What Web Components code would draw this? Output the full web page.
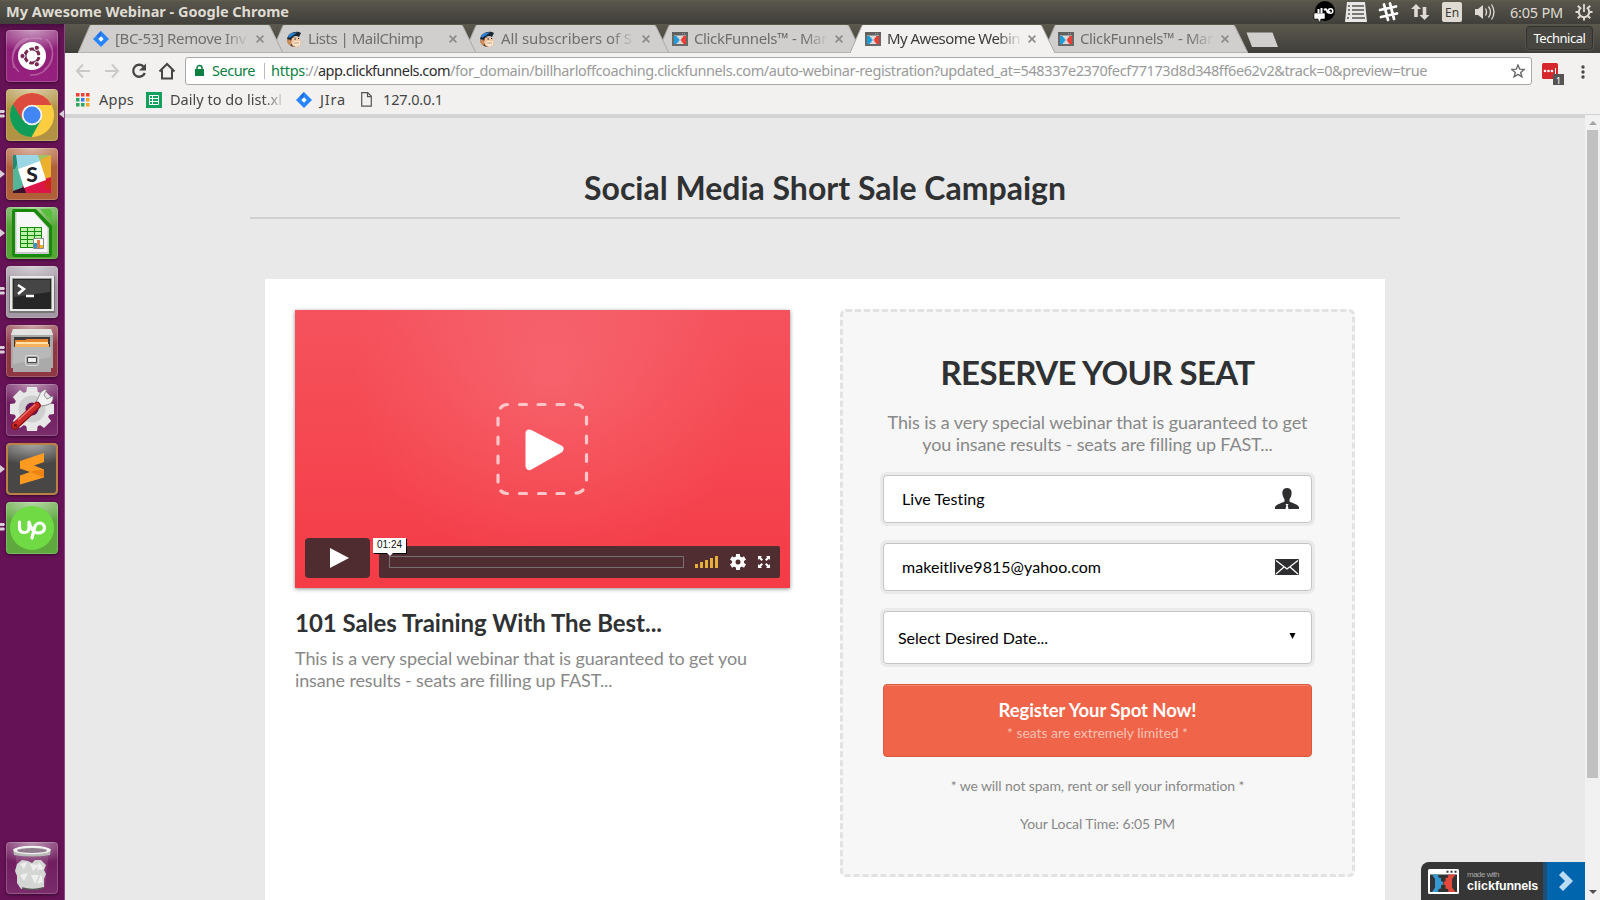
<!DOCTYPE html>
<html lang="en">
<head>
<meta charset="utf-8">
<title>My Awesome Webinar</title>
<style>
html,body{margin:0;height:100%;overflow:hidden}
body{font-family:"Noto Sans","Open Sans",sans-serif}
</style>
</head>
<body>
<desk-top></desk-top>
<script>
const make=(name,css,html,after)=>customElements.define(name,class extends HTMLElement{
  constructor(){super();this.attachShadow({mode:'open'})}
  connectedCallback(){
    if(this.shadowRoot.firstChild)return;
    this.shadowRoot.innerHTML='<style>:host{display:block;box-sizing:border-box}*{box-sizing:border-box}svg{display:block}'+css+'</style>'+(typeof html==='function'?html(this):html);
    if(after)after(this);
  }
});

/* Single line of text spread to a given pixel width */
make('fit-text',':host{white-space:pre;width:max-content;flex:none}span{display:inline-block}',
  e=>`<span>${e.getAttribute('text').replace(/&/g,'&amp;')}</span>`,
  e=>{const w=+e.getAttribute('w'),s=e.shadowRoot.querySelector('span');if(w){const n=s.getBoundingClientRect().width;s.style.letterSpacing=((w-n)/e.getAttribute('text').length)+'px'}});

const ICON={
jira:'<svg width="16" height="16" viewBox="0 0 16 16"><path d="M8 0l8 8-8 8-8-8z" fill="#2684ff"/><path d="M8 0L3.5 4.500 8 9z" fill="#1f6fe0"/><path d="M8 5.300L10.700 8 8 10.700 5.300 8z" fill="#fff"/></svg>',
chimp:'<svg width="16" height="17" viewBox="0 0 16 17"><path d="M3 6C0 9 2 14 6 15.500l3 .5 3-9z" fill="#5b3823"/><path d="M6 7l7-1 2 4c0 4-2 6-5 6s-5-3-5-5z" fill="#efc7a0"/><path d="M8 10l6 0v4l-4 1.500-3-2z" fill="#fbe6d0"/><path d="M1 8C2 3 7 0 13 1l2 1-2 4C10 4 7 5 4 9z" fill="#1b2635"/><path d="M2 5C4 2 8 1 11 1.500L6 5 3 7z" fill="#2f86d8"/><path d="M1 11a2 2 0 0 1 4-1v4H3z" fill="#c98b5c"/><path d="M8.500 8h1.500M12 7.500h1.200" stroke="#222"/><path d="M8 12h5" stroke="#a77853" stroke-width=".7"/></svg>',
funnel:'<svg width="16" height="14" viewBox="0 0 16 14"><path d="M1 1h14v12H1z" fill="#dcdcdc" stroke="#6a6a6a" stroke-width="2"/><path d="M0 0h16v3.500H0z" fill="#606060"/><path d="M2 4h2.500l.8 1.600h1.200v1.600h1v1.600h-1v1.600H5.300L4.500 12H2z" fill="#1f9bd8"/><path d="M14 4h-2.500l-.8 1.600H9.700v1.600h-1v1.600h1v1.600h1l.8 1.600H14z" fill="#ec3f34"/><path d="M10 1.800h1M12 1.800h1" stroke="#aaa"/></svg>',
close:'<svg width="8" height="8" viewBox="0 0 8 8"><path d="M.6.6l6.800 6.800M7.400.6L.6 7.400" stroke="#8b8b8a" stroke-width="1.600"/></svg>'
};

make('browser-tab',
`:host{width:205px;height:29px;margin-right:-12px;position:relative;flex:none;display:flex;align-items:center;padding-left:15px;color:#6e6e6d;font-size:15px;z-index:var(--z,1)}
:host([active]){color:#3d3d3d}
.shape{position:absolute;left:0;top:0}
.ic{position:relative;width:16px;height:16px;display:grid;place-items:center}
.t{position:relative;margin-left:6px;width:133px;height:28px;line-height:27px;-webkit-mask-image:linear-gradient(90deg,#000 83%,rgba(0,0,0,.15) 98%)}
.x{position:relative;margin-left:8px}`,
e=>`<svg class="shape" width="205" height="29" viewBox="0 0 205 29"><path d="M0 29L12 1.500Q12.500 1 13 1H190Q191 1 191.500 1.500L205 29z" fill="${e.hasAttribute('active')?'#f2f1f0':'#d0cfcd'}"/><path d="M0 29L12 1.500M191.500 1.500L205 29" stroke="#aaa9a6" fill="none"/>${e.hasAttribute('active')?'':'<path d="M1 28.500H204" stroke="#b4b3b1"/>'}</svg><div class="ic">${ICON[e.getAttribute('icon')]}</div><div class="t"><fit-text text="${e.getAttribute('label')}" w="${e.getAttribute('w')}"></fit-text></div><div class="x">${ICON.close}</div>`);

make('top-panel',
`:host{height:24px;display:flex;align-items:center;background:linear-gradient(#605e50,#57554b 2px,#403f3a);color:#dfdbd2;font-size:14.500px;padding:0 7px 0 6px;line-height:22px}
.b{font-weight:700;flex:1;margin-top:-2px}.r{display:flex;align-items:center;height:24px}`,
`<div class="b"><fit-text text="My Awesome Webinar - Google Chrome" w="283"></fit-text></div>
<div class="r">
<svg width="24" height="24" viewBox="0 0 24 24"><circle cx="13" cy="11" r="10" fill="#000"/><path d="M2 13h11v6H9l-2 4-1-4H2z" fill="#fff" stroke="#000" stroke-width=".6"/><path d="M6.500 9v4M9.500 8v5" stroke="#fff" stroke-width="2"/><path d="M12 10q2-2 3 1t3 0" fill="none" stroke="#fff" stroke-width="2"/><circle cx="18.500" cy="11" r="2.300" fill="none" stroke="#fff" stroke-width="1.500"/></svg>
<svg style="margin-left:9px" width="22" height="21" viewBox="0 0 22 21"><path d="M2 0h18l2 20H0z" fill="#e8e8e8"/><path d="M3 4h2M7 4h12M3 8h2M7 8h12M3 12h2M7 12h12M2 16h2M7 16h13" stroke="#55544d" stroke-width="1.500"/></svg>
<svg style="margin-left:10px" width="22" height="22" viewBox="0 0 22 22"><path d="M7 3.500l4 15.500M13 2.500l4 15.500M3 9l16-3.500M4 16l16-3.500" stroke="#fff" stroke-width="2.800" stroke-linecap="round"/></svg>
<svg style="margin-left:12px" width="19" height="18" viewBox="0 0 19 18"><path d="M5 1l5 5H6.800v8H3.200V6H0zM13.500 17l-5-5h3.200V4h3.600v8h3.200z" fill="#dfdbd2"/></svg>
<svg style="margin-left:12px" width="20" height="20" viewBox="0 0 20 20"><rect width="20" height="20" rx="2" fill="#dfdbd2"/><text x="10" y="15" text-anchor="middle" font-family="Noto Sans" font-size="12" fill="#3c3b37">En</text></svg>
<svg style="margin-left:12px" width="22" height="18" viewBox="0 0 22 18"><path d="M1 6h3l5-4v14l-5-4H1z" fill="#dfdbd2"/><path d="M11.500 5.500q2 3.500 0 7M14.500 3.500q4 5.500 0 11M17.500 1.500q5 7.500 0 15" fill="none" stroke="#dfdbd2" stroke-width="1.300"/></svg>
<fit-text style="margin-left:14px" text="6:05 PM" w="53"></fit-text>
<svg style="margin-left:12px" width="18" height="18" viewBox="0 0 18 18"><path d="M6.300 4.500a5.200 5.200 0 1 0 5.400 0" fill="none" stroke="#dfdbd2" stroke-width="2"/><path d="M9 1v8" stroke="#dfdbd2" stroke-width="1.800"/><path d="M2.800 2.800l2 2M15.200 2.800l-2 2M.5 9h3M17.500 9h-3M2.800 15.200l2-2M15.200 15.200l-2-2M9 17.500v-3" stroke="#dfdbd2" stroke-width="2"/></svg>
</div>`);

make('launcher-tile',
`:host{width:65px;height:59px;position:relative;flex:none;padding-left:6px}
.t{width:52px;height:52px;border-radius:4px;background:radial-gradient(ellipse 46px 22px at 50% 0,rgba(255,255,255,.55),rgba(255,255,255,0)),var(--c,#7d2a6f);box-shadow:0 0 0 1px rgba(255,255,255,.2) inset,0 1px 3px rgba(0,0,0,.5);overflow:hidden}
.p{position:absolute;left:0;top:20px}.q{position:absolute;right:1px;top:21px}`,
e=>`<div class="t"><slot></slot></div>`+
({two:'<svg class="p" width="5" height="12"><path d="M0 1h4l1 1.500L4 4H0zM0 5.500h4L5 7l-1 1.500H0z" fill="#d9cfd7"/></svg>',one:'<svg class="p" width="5" height="12"><path d="M0 2l5 4-5 4z" fill="#d9cfd7"/></svg>'}[e.getAttribute('pip')]||'')+(e.hasAttribute('focus')?'<svg class="q" width="5" height="8"><path d="M5 0L0 4l5 4z" fill="#d9cfd7"/></svg>':''));

make('app-launcher',
`:host{width:65px;background:linear-gradient(#4a0d41,#661256 8px,#661256);border-right:1px solid #8b4a7f;display:flex;flex-direction:column;padding-top:6px;height:877px}
.s{flex:1}`,
`<launcher-tile style="--c:linear-gradient(#8a1f74,#97207e)"><svg width="52" height="52" viewBox="0 0 52 52"><g fill="none" stroke="#d9a6cd" opacity=".45"><path d="M8 38C2 18 20 4 36 9M44 14c8 16-4 32-20 31M13 42C0 30 8 10 22 8M40 9c10 8 8 24-2 31" stroke-width="1.500"/></g><circle cx="26" cy="26" r="14" fill="#fff"/><circle cx="26" cy="26" r="7" fill="none" stroke="#772953" stroke-width="3" stroke-dasharray="12.600 2.060" transform="rotate(8 26 26)"/><g fill="#772953" stroke="#fff" stroke-width="1"><circle cx="16.500" cy="26" r="2.600"/><circle cx="30.800" cy="17.800" r="2.600"/><circle cx="30.800" cy="34.300" r="2.600"/></g></svg></launcher-tile>
<launcher-tile pip="two" focus style="--c:#b29343"><svg width="52" height="52" viewBox="0 0 52 52"><circle cx="26" cy="26" r="22" fill="#ffcd40"/><path d="M6.900 15A22 22 0 0 0 25.500 48L35 31 26 26z" fill="#119d58"/><path d="M6.900 15A22 22 0 0 1 45.600 16H26L16.500 31z" fill="#dd4b3e"/><circle cx="26" cy="26" r="10.300" fill="#f1f1f1"/><circle cx="26" cy="26" r="8.500" fill="#4285f4"/></svg></launcher-tile>
<launcher-tile pip="one" style="--c:#b06038"><svg width="52" height="52" viewBox="0 0 52 52"><path d="M7 7h38v38H7z" fill="#55b598"/><path d="M7 7h8L9 21H7z" fill="#1e8c76"/><path d="M10 7h22l3 6-23 8z" fill="#9bd6e5"/><path d="M32 7h13L34 13z" fill="#a8bf60"/><path d="M34 12l11-5v24l-6 3z" fill="#ecb02c"/><path d="M16 38l29-9v16H19z" fill="#dc1549"/><path d="M38 34l7-3v9l-5 2z" fill="#d2201c"/><path d="M7 43l11-4 2 6H7z" fill="#36122b"/><path d="M12 21l22-8 6 19-22 8z" fill="#fff"/><text x="26" y="33.500" text-anchor="middle" font-family="Lato" font-weight="900" font-size="21" fill="#1f2226">S</text></svg></launcher-tile>
<launcher-tile pip="one" style="--c:#55a537"><svg width="52" height="52" viewBox="0 0 52 52"><path d="M8 2h22l16 17v28q0 3-3 3H9q-3 0-3-3V5q0-3 2-3z" fill="#188a08"/><path d="M34 2h10l2 2v11z" fill="#58bd3c"/><path d="M9 5h19l15 16v26H9z" fill="#c9c9c9"/><path d="M10.500 5h17l14 16v24h-31z" fill="#f7f7f7"/><path d="M14 20h22v21H14z" fill="#168a0c"/><g fill="#bcf3a8"><path d="M15 21h6v3h-6zM22 21h6v3h-6zM29 21h6v3h-6zM15 25h6v3h-6zM22 25h6v3h-6zM29 25h6v3h-6zM15 29h6v3h-6zM22 29h6v3h-6zM29 29h6v3h-6zM15 33h6v3h-6zM22 33h6v3h-6zM15 37h6v3h-6zM22 37h6v3h-6z"/></g><path d="M27.500 31.500h10v10h-10z" fill="#fff" stroke="#888"/><path d="M28 36h3v5h-3z" fill="#289ad0"/><path d="M31 33h3v8h-3z" fill="#e57c43"/><path d="M34 38h3v3h-3z" fill="#eab522"/></svg></launcher-tile>
<launcher-tile pip="two" style="--c:#a397a4"><svg width="52" height="52" viewBox="0 0 52 52"><path d="M3 10h46v37H3z" fill="#777"/><path d="M4 10h44v35H4z" fill="#e9e9e8"/><path d="M6 12h40v31H6z" fill="#999"/><path d="M7 13h38v30H7z" fill="#262626"/><path d="M8 14h36v12L8 31z" fill="#454545"/><path d="M12 19l6 4-6 5" fill="none" stroke="#fff" stroke-width="2.500"/><path d="M20 30h8" stroke="#fff" stroke-width="2.500"/></svg></launcher-tile>
<launcher-tile pip="two" style="--c:#8f3844"><svg width="52" height="52" viewBox="0 0 52 52"><path d="M7 4h38l2 5v34H5V9z" fill="#a9a9a7"/><path d="M7 4h38l2 6H5z" fill="#e3e3e1"/><path d="M8 12h36v11H8z" fill="#3c3c3c"/><path d="M9 15h10l2-1h21v8H9z" fill="#e8862e"/><path d="M10 17h32v3H10z" fill="#ffe1a9"/><path d="M9 19h34v4H9z" fill="#f5b35d"/><path d="M7 22h38v25H7z" fill="#aaa"/><path d="M7 22h38v10L7 39z" fill="#b8b8b8"/><rect x="19.500" y="30.500" width="13" height="10" rx="2" fill="#aaa" stroke="#ddd"/><path d="M21.500 32.500h9v5h-9z" fill="#eee" stroke="#444"/></svg></launcher-tile>
<launcher-tile style="--c:linear-gradient(#6a1559,#7a2c6b)"><svg width="52" height="52" viewBox="0 0 52 52"><g fill="#e7e7e7"><circle cx="26" cy="25" r="18"/><path d="M21 3h10l1 7H20zM21 47h10l1-7H20zM4 20v10l7 1V19zM48 20v10l-7 1V19z"/><path d="M21 3h10l1 7H20zM21 47h10l1-7H20zM4 20v10l7 1V19zM48 20v10l-7 1V19z" transform="rotate(45 26 25)"/></g><circle cx="26" cy="25" r="13.500" fill="#cfcfcf"/><circle cx="26" cy="25" r="6.500" fill="#67165b"/><path d="M29 20l4-8q2-6 8-7l-3 6 3 4 6-3q1 7-6 9l-6 1z" fill="#f2f2f2" stroke="#777" stroke-width=".8"/><path d="M31 21.500L9 42" stroke="#8e1313" stroke-width="7.500" stroke-linecap="round"/><path d="M30.500 21.500L9 41.500" stroke="#cf2b2a" stroke-width="5.500" stroke-linecap="round"/><path d="M29 20.500L12 36" stroke="#e97870" stroke-width="1.500"/><circle cx="9.500" cy="41.500" r="1.800" fill="#751111"/></svg></launcher-tile>
<launcher-tile pip="one" style="--c:#484746"><svg width="52" height="52" viewBox="0 0 52 52"><rect x="1" y="1" width="50" height="50" rx="4" fill="none" stroke="#bd8145" stroke-width="2"/><path d="M14 18l24-8v9l-10 3.500 10 4v8l-24 7v-9l10-3.500-10-3.500z" fill="#ff9a20"/><path d="M24 29l4-1.500 10-.500v7.500z" fill="#ee8210"/></svg></launcher-tile>
<launcher-tile pip="two" style="--c:#5fa83e"><svg width="52" height="52" viewBox="0 0 52 52"><circle cx="26" cy="26" r="22" fill="#6fda44"/><path d="M13.500 20v5.500q0 5 4.800 5t4.700-5V20q2 8 7 10.500 3 1 5 0 4-1.500 3.500-5-.5-4-5-4.500-4 .5-5 5l-2.500 10" fill="none" stroke="#fff" stroke-width="3.200" stroke-linecap="round" stroke-linejoin="round"/></svg></launcher-tile>
<div class="s"></div>
<launcher-tile style="--c:linear-gradient(#6a1559,#7a2c6b)"><svg width="52" height="52" viewBox="0 0 52 52"><path d="M9 9l4 36q13 4 26 0l4-36z" fill="#fff" opacity=".1"/><path d="M11 22l5-4 6 1 4 2 3-3 6 0 5 5-2 5 2 4-2 5 0 8-7 3-8-1-8 0-4-6 0-7-2-5z" fill="#d4d6d4"/><path d="M14 22l7-2-3 7zM24 22l9 1-6 6zM33 20l5 7-7 1zM14 33l8-2-4 8zM25 33l8 0-4 9zM35 32l2 8-6 2z" fill="#efefef"/><path d="M16 46q11 3 21 0" stroke="#555" stroke-width="1.500" fill="none"/><path d="M7 7q19-6 38 0l-1 6q-18 3-36 0z" fill="#b9bab7"/><ellipse cx="26" cy="8" rx="18.500" ry="4.300" fill="#f2f2f0"/><ellipse cx="26" cy="8.500" rx="15" ry="2.500" fill="#8f7e8d"/></svg></launcher-tile>`);

make('tab-strip',
`:host{height:29px;background:linear-gradient(#5b594d,#3f3e3a);display:flex;padding-left:13px;position:relative}
.g{flex:1}.new{margin:8px 0 0 -2px}.u{margin:2px 7px 0 0;width:67px;height:24px;border:1px solid #33322e;border-radius:4px;background:#474641;color:#fff;font-size:13px;line-height:22px;display:grid;place-items:center;box-shadow:0 0 0 1px #55534b}
browser-tab:last-of-type{margin-right:0}`,
`<browser-tab icon="jira" label="[BC-53] Remove Inv" w="131" style="--z:6"></browser-tab><browser-tab icon="chimp" label="Lists | MailChimp" w="115" style="--z:5"></browser-tab><browser-tab icon="chimp" label="All subscribers of S" w="131" style="--z:4"></browser-tab><browser-tab icon="funnel" label="ClickFunnels™ - Mar" w="133" style="--z:3"></browser-tab><browser-tab active icon="funnel" label="My Awesome Webin" w="133" style="--z:9"></browser-tab><browser-tab icon="funnel" label="ClickFunnels™ - Mar" w="133" style="--z:1"></browser-tab>
<svg class="new" width="34" height="16"><path d="M.5.5h26l5.500 14.500H6z" fill="#d0cfcd"/></svg><div class="g"></div><div class="u"><fit-text text="Technical" w="52"></fit-text></div>`);

make('address-bar',
`:host{height:35px;background:#f2f1f0;display:flex;padding:4px 9px 0 11px;align-items:flex-start}
.n{display:flex;height:28px;align-items:center;width:109px}
.box{width:1347px;height:28px;border:1px solid #a9a8a6;border-radius:3px;background:#fff;display:flex;align-items:center;font-size:14.500px;padding-left:9px;color:#9a9a9a;line-height:22px}
.box fit-text{margin-top:-2px}
.g{color:#0b8043}.k{color:#2d2d2d}.sep{width:1px;height:16px;background:#bbb;margin:0 6px 0 9px}.f{flex:1}
.ext{margin:6px 0 0 10px}.m{margin:8px 0 0 16px}`,
`<div class="n"><svg width="109" height="28" viewBox="0 0 109 28"><g fill="none" stroke="#cbcac8" stroke-width="2"><path d="M14 14H1M7 7.500L1 14l6 6.500M29 14h13M36 7.500l6 6.500-6 6.500"/></g><g fill="none" stroke="#454545" stroke-width="2.300"><path d="M67.500 9.500a6 6 0 1 0 1.300 6.500"/><path d="M86 13v8.500h10V13M83.500 14.500l7.500-7.500 7.500 7.500" stroke-width="2"/></g><path d="M70 6.500v7h-7z" fill="#454545"/></svg></div>
<div class="box"><svg style="margin-top:-1px" width="9" height="13" viewBox="0 0 9 13"><path d="M2 6V4a2.500 2.500 0 0 1 5 0v2" fill="none" stroke="#0b8043" stroke-width="1.500"/><path d="M0 5h9v7H0z" fill="#0b8043"/></svg><fit-text class="g" style="margin-left:8px" text="Secure" w="43"></fit-text><div class="sep"></div><fit-text class="g" text="https" w="34"></fit-text><fit-text text="://" w="13"></fit-text><fit-text class="k" text="app.clickfunnels.com" w="132"></fit-text><fit-text text="/for_domain/billharloffcoaching.clickfunnels.com/auto-webinar-registration?updated_at=548337e2370fecf77173d8d348ff6e62v2&track=0&preview=true" w="977"></fit-text><div class="f"></div><svg style="margin-right:6px" width="14" height="14" viewBox="0 0 14 14"><path d="M7 1l1.700 4.200 4.500.3-3.500 2.900 1.200 4.400L7 10.300l-3.900 2.500 1.200-4.400L.8 5.500l4.500-.3z" fill="none" stroke="#6a6a6a" stroke-width="1.400"/></svg></div>
<svg class="ext" width="23" height="23" viewBox="0 0 23 23"><rect width="16" height="16" rx="1.500" fill="#d6282b"/><g fill="#fff"><circle cx="3" cy="8" r="1.300"/><circle cx="6.500" cy="8" r="1.300"/><circle cx="10" cy="8" r="1.300"/><path d="M13 5h1v6h-1z"/></g><path d="M11 11h11v11H11z" fill="#555"/><text x="16.500" y="20.500" text-anchor="middle" font-family="Noto Sans" font-size="9.500" fill="#fff">1</text></svg>
<svg class="m" width="4" height="14"><g fill="#484848"><circle cx="2" cy="2" r="1.700"/><circle cx="2" cy="7" r="1.700"/><circle cx="2" cy="12" r="1.700"/></g></svg>`);

make('bookmark-bar',
`:host{height:30px;background:#f2f1f0;border-bottom:4px solid #d3d3d3;display:flex;padding:0 0 0 11px;font-size:14.500px;color:#454545;line-height:22px}
.i{height:23px;display:flex;align-items:center}`,
`<div class="i"><svg width="14" height="14"><g fill="#ee4035"><path d="M0 0h3.500v3.500H0zM5 0h3.500v3.500H5zM10 0h3.500v3.500H10z"/></g><path d="M0 5h3.500v3.500H0zM0 10h3.500v3.500H0zM5 10h3.500v3.500H5z" fill="#2ba55f"/><path d="M5 5h3.500v3.500H5z" fill="#3d7cf0"/><path d="M10 5h3.500v3.500H10zM10 10h3.500v3.500H10z" fill="#f5a42c"/></svg></div><fit-text style="margin-left:9px" text="Apps" w="35"></fit-text>
<div class="i" style="margin-left:12px"><svg width="16" height="16"><path d="M0 0h16v16H0z" fill="#12a05c"/><path d="M3.500 3.500h9v9h-9zM3.500 6.500h9M3.500 9.500h9M6.500 3.500v9" fill="none" stroke="#fff"/></svg></div><div style="margin-left:8px;width:113px;-webkit-mask-image:linear-gradient(90deg,#000 82%,rgba(0,0,0,.15))"><fit-text text="Daily to do list.xl" w="112"></fit-text></div>
<div class="i" style="margin-left:13px">${ICON.jira}</div><fit-text style="margin-left:8px" text="JIra" w="26"></fit-text>
<div class="i" style="margin-left:15px"><svg width="11" height="15"><path d="M.7.7h6l3.600 3.600v9.900H.700zM6.500.7v4h4" fill="none" stroke="#555" stroke-width="1.200"/></svg></div><fit-text style="margin-left:11px" text="127.0.0.1" w="60"></fit-text>`);

make('scroll-bar',
`:host{width:15px;height:785px;margin-top:-3px;background:#f1f1f1;display:flex;flex-direction:column;align-items:center;padding:6px 0 6px}
.t{width:11px;height:648px;background:#c1c1c1;margin:5px 0 0 0}.s{flex:1}`,
`<svg width="8" height="4"><path d="M0 4l4-4 4 4z" fill="#a3a3a3"/></svg><div class="t"></div><div class="s"></div><svg width="8" height="4"><path d="M0 0l4 4 4-4z" fill="#505050"/></svg>`);

make('video-player',
`:host{width:495px;height:278px;position:relative;background:radial-gradient(ellipse 200px 190px at 52% 25%,rgba(255,255,255,.12),rgba(255,255,255,0)),linear-gradient(#f5525d,#f54650 55%,#f43b46);box-shadow:0 1px 4px rgba(0,0,0,.45);display:flex;flex-direction:column;justify-content:flex-end}
.poster{flex:1;padding:89px 0 0 200px}
.c{display:flex;align-items:flex-end;gap:9px;padding:0 10px 10px}
.play{width:65px;height:40px;border-radius:4px;background:#4e2c2f;display:grid;place-items:center}
.bar{flex:1;height:32px;border-radius:2px;background:#502d30;display:flex;align-items:center;padding-left:10px}
.p{width:295px;height:12px;border:1px solid #777071}
.tip{position:absolute;left:78px;top:228px;width:33px;height:15px;background:#fff;box-shadow:1px 1px 0 #000;font:10px/14px "Liberation Sans",sans-serif;color:#111;padding-left:4px}
.tip:after{content:"";position:absolute;left:14px;top:15px;border:3px solid transparent;border-top-color:#fff}`,
`<div class="poster"><svg width="96" height="96" viewBox="0 0 96 96"><g fill="none" stroke="#fcc5c8" stroke-width="3.200" stroke-linecap="round"><path d="M5.500 9Q8 5.500 12.500 5.500M24.500 5.500h7M43 5.500h7M62 5.500h7M80.500 5.500Q86 5.500 87.500 8.500M91.500 18v7M91.500 37v7M91.500 55.500v7M91.500 74v7M88 91Q85 94 81 94M69 94.500h-7M50.500 94.500h-7M31.500 94.500h-7M12.500 94.500Q8.500 94.500 6 92M3 83v-7M3 64v-7M3 45v-7M3 26v-7"/></g><path d="M34.500 34.500L64.500 50 34.500 67z" fill="#fff" stroke="#fff" stroke-width="8" stroke-linejoin="round"/></svg></div>
<div class="c"><div class="play"><svg style="margin-left:5px" width="20" height="20"><path d="M0 0l19 10L0 20z" fill="#fff"/></svg></div><div class="bar"><div class="p"></div>
<svg style="margin-left:11px" width="24" height="12"><path d="M0 8h3v4H0zM5 6h3v6H5zM10 4h3v8h-3zM15 2h3v10h-3zM20 0h3v12h-3z" fill="#e8b03b"/></svg>
<svg style="margin-left:11px" width="16" height="16" viewBox="0 0 16 16"><circle cx="8" cy="8" r="4.300" fill="none" stroke="#fff" stroke-width="3.600"/><path d="M8 0v3M8 13v3M1 4l2.500 1.500M12.500 10.500L15 12M1 12l2.500-1.500M12.500 5.500L15 4" stroke="#fff" stroke-width="4"/></svg>
<svg style="margin-left:12px" width="12" height="12" viewBox="0 0 12 12"><path d="M0 0h4L2.800 1.200 5 3.500 3.500 5 1.200 2.800 0 4zM12 0v4l-1.200-1.200L8.500 5 7 3.500l2.200-2.300L8 0zM0 12V8l1.200 1.200L3.500 7 5 8.500l-2.200 2.300L4 12zM12 12H8l1.200-1.200L7 8.500 8.500 7l2.300 2.200L12 8z" fill="#fff"/></svg></div></div>
<div class="tip"><fit-text text="01:24" w="25"></fit-text></div>`);

make('form-field',
`:host{width:429px;height:48px;background:#fff;border:1px solid #c5c5c5;border-radius:4px;box-shadow:0 0 0 3px #eaeaea;display:flex;align-items:center;justify-content:space-between;padding:0 12px 0 18px;font:16px/20px Lato,sans-serif;color:#000}
:host([select]){height:53px;padding:1px 15px 0 14px}`,
e=>`<fit-text text="${e.getAttribute('value')}" w="${e.getAttribute('w')}"></fit-text><slot></slot>`);

make('webinar-form',
`:host{width:515px;height:568px;border:3px dashed #e2e2e2;border-radius:6px;background:#f7f7f7;padding:38px 38px;display:flex;flex-direction:column;align-items:center;font-family:Lato,sans-serif;color:#888}
.h{font-size:33px;line-height:44px;font-weight:700;color:#2f3133}
.d{font-size:18px;line-height:22px;margin-top:17px;display:grid;justify-items:center}
.b{width:429px;height:73px;border:1px solid #d9593f;border-radius:4px;background:#f06449;margin-top:20px;color:#fff;display:flex;flex-direction:column;align-items:center;box-shadow:inset 0 1px 0 #f4846c}
.b1{font-size:18.500px;font-weight:700;line-height:24px;margin-top:13px}
.b2{font-size:14px;line-height:18px;margin-top:2px;color:#f9c1b4}
.n{font-size:14px;line-height:20px}`,
`<fit-text class="h" text="RESERVE YOUR SEAT" w="314"></fit-text>
<div class="d"><fit-text text="This is a very special webinar that is guaranteed to get" w="420"></fit-text><fit-text text="you insane results - seats are filling up FAST..." w="350"></fit-text></div>
<form-field style="margin-top:20px" value="Live Testing" w="83"><svg width="24" height="22" viewBox="0 0 24 22"><path d="M12 0c4 0 5 3 4.500 6.500C16 9 15 10 14.500 11.500v2c2 1.500 8 2.500 9.500 5.500v2H0v-2c1.500-3 7.500-4 9.500-5.500v-2C9 10 8 9 7.500 6.500 7 3 8 0 12 0z" fill="#2f2f31"/><path d="M10.500 16h3l-.8 1.500.8 3.500h-3l.8-3.500z" fill="#fff"/></svg></form-field>
<form-field style="margin-top:20px" value="makeitlive9815@yahoo.com" w="199"><svg width="24" height="16" viewBox="0 0 24 16"><rect width="24" height="16" rx="1" fill="#2f2f31"/><path d="M1 1.500l11 8.500 11-8.500M1 15l8-7M23 15l-8-7" fill="none" stroke="#fff" stroke-width="1.300"/></svg></form-field>
<form-field select style="margin-top:20px" value="Select Desired Date..." w="150"><svg width="7" height="6" style="margin-top:-4px"><path d="M.5 0h6L3.500 6z" fill="#000"/></svg></form-field>
<div class="b"><fit-text class="b1" text="Register Your Spot Now!" w="198"></fit-text><fit-text class="b2" text="* seats are extremely limited *" w="181"></fit-text></div>
<fit-text class="n" style="margin-top:19px" text="* we will not spam, rent or sell your information *" w="294"></fit-text>
<fit-text class="n" style="margin-top:18px" text="Your Local Time: 6:05 PM" w="155"></fit-text>`);

make('made-badge',
`:host{position:absolute;right:0;bottom:0;width:164px;height:38px;background:#363636;border-radius:8px 0 0 0;display:flex;overflow:hidden;font-family:"Liberation Sans",sans-serif;color:#fff}
.t{margin-left:8px;padding-top:8px;flex:1}.a{font-size:8px;line-height:10px;color:#aaa}.b{font-size:12.500px;line-height:12px;font-weight:700;display:flex}.r{width:42px;border-left:4px solid #1d4f78;background:#0065ad;display:grid;place-items:center}`,
`<svg style="margin:7px 0 0 7px" width="31" height="26" viewBox="0 0 31 26"><rect width="31" height="25" rx="1.500" fill="#fff"/><path d="M2 5.500h27V23H2z" fill="#333"/><path d="M18.500 2.800h2M22.500 2.800h2M26.500 2.800h2" stroke="#333" stroke-width="2"/><path d="M4 5.500h6l.5 3 2.500.5v3l2 1v2.500l-2 1v3l-2.500.5L10 23H4l3-4.500v-8.500z" fill="#3598cf"/><path d="M27.500 5.500h-7l-.5 3-2.500.5v3l-2 1v2.500l2 1v3l2.500.5.5 3h7L24 18.500V10z" fill="#e2483b"/></svg>
<div class="t"><fit-text class="a" text="made with" w="32"></fit-text><div class="b"><fit-text text="click" w="28"></fit-text><fit-text text="funnels" w="43"></fit-text></div></div>
<div class="r"><svg width="14" height="20"><path d="M0 4l4-4 10 10L4 20l-4-4 6-6z" fill="#bcdcf3"/></svg></div>`);

make('landing-page',
`:host{flex:1;height:782px;background:#e9e9e9;position:relative;overflow:hidden;display:flex;flex-direction:column;align-items:center;font-family:Lato,sans-serif;color:#888}
.h{width:1150px;height:101px;flex:none;border-bottom:2px solid #d0d0d0;display:flex;justify-content:center;padding-top:49px;font-size:32px;line-height:42px;font-weight:700;color:#2f3133}
.card{width:1120px;margin-top:60px;height:640px;flex:none;background:#fff;display:flex;justify-content:space-between;padding:30px 30px}
.l{padding-top:1px}
.v{font-size:24px;line-height:30px;font-weight:700;color:#2f3133;margin-top:20px}
.d{font-size:18px;line-height:22px;margin-top:9px}`,
`<div class="h"><fit-text text="Social Media Short Sale Campaign" w="482"></fit-text></div>
<div class="card"><div class="l"><video-player></video-player><fit-text class="v" text="101 Sales Training With The Best..." w="367"></fit-text><div class="d"><fit-text text="This is a very special webinar that is guaranteed to get you" w="452"></fit-text><fit-text text="insane results - seats are filling up FAST..." w="317"></fit-text></div></div><webinar-form></webinar-form></div>
<made-badge></made-badge>`);

make('desk-top',
`:host{width:1600px;height:900px;overflow:hidden}.row{display:flex}.br{flex:1}.pg{display:flex;height:782px}`,
`<top-panel></top-panel><div class="row"><app-launcher></app-launcher><div class="br"><tab-strip></tab-strip><address-bar></address-bar><bookmark-bar></bookmark-bar><div class="pg"><landing-page></landing-page><scroll-bar></scroll-bar></div></div></div>`);
</script>
</body>
</html>
